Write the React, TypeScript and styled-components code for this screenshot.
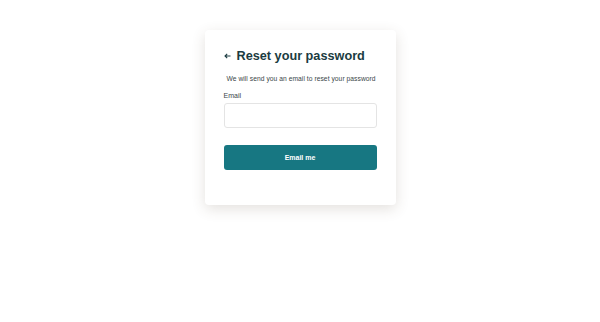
import styled, { createGlobalStyle } from 'styled-components';

const GlobalStyle = createGlobalStyle`
  html, body {
    margin: 0;
    padding: 0;
    background: #ffffff;
    font-family: "Liberation Sans", Arial, sans-serif;
  }
`;

const Page = styled.div`
  width: 600px;
  height: 322px;
  display: flex;
  justify-content: center;
  align-items: flex-start;
  padding-top: 30px;
  box-sizing: border-box;
`;

const Card = styled.div`
  width: 191px;
  box-sizing: border-box;
  padding: 18px 19px 35px;
  background: #ffffff;
  border-radius: 4px;
  box-shadow: 0 4px 14px rgba(90, 70, 50, 0.16);
`;

const Header = styled.div`
  display: flex;
  align-items: center;
  gap: 6px;
  height: 16px;
`;

const BackButton = styled.button`
  border: none;
  background: none;
  padding: 0;
  display: flex;
  align-items: center;
  cursor: pointer;
  color: #1b3b41;
`;

const Title = styled.h1`
  margin: 0;
  font-size: 12.7px;
  font-weight: 700;
  color: #1b3b41;
  white-space: nowrap;
`;

const Subtitle = styled.p`
  margin: 11px 0 0 3px;
  font-size: 6.7px;
  letter-spacing: 0.05px;
  color: #3a4648;
  white-space: nowrap;
`;

const Label = styled.label`
  display: block;
  margin-top: 10px;
  font-size: 7px;
  color: #3a4648;
`;

const Input = styled.input`
  display: block;
  width: 100%;
  height: 25px;
  box-sizing: border-box;
  margin-top: 4px;
  border: 1px solid #e4e4e4;
  border-radius: 3px;
  outline: none;
`;

const SubmitButton = styled.button`
  display: block;
  width: 100%;
  height: 25px;
  margin-top: 17px;
  border: none;
  border-radius: 3px;
  background: #177782;
  color: #ffffff;
  font-family: "Liberation Sans", Arial, sans-serif;
  font-size: 7px;
  font-weight: 700;
  cursor: pointer;
`;

const App = (): JSX.Element => {
  return (
    <>
      <GlobalStyle />
      <Page>
        <Card>
          <Header>
            <BackButton aria-label="Back">
              <svg width="7" height="6" viewBox="0 0 7 6" fill="none">
                <path d="M6.5 3H1M3.2 0.8L1 3l2.2 2.2" stroke="currentColor" strokeWidth="1.1" />
              </svg>
            </BackButton>
            <Title>Reset your password</Title>
          </Header>
          <Subtitle>We will send you an email to reset your password</Subtitle>
          <Label htmlFor="email">Email</Label>
          <Input id="email" type="email" />
          <SubmitButton>Email me</SubmitButton>
        </Card>
      </Page>
    </>
  );
};

export default App;
